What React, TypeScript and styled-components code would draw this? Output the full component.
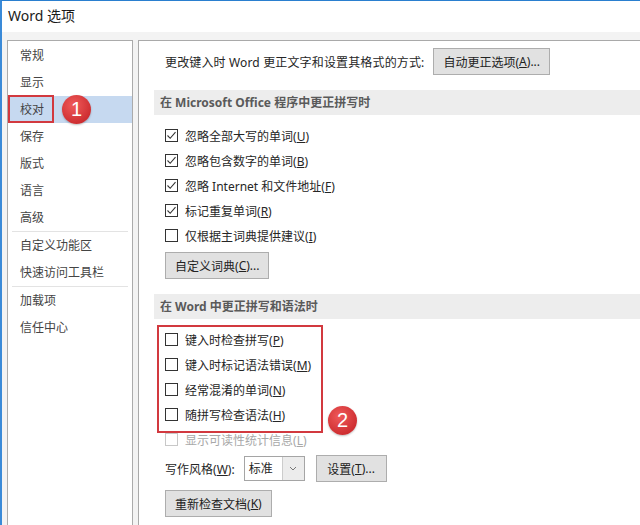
import styled, { createGlobalStyle } from "styled-components";

const GlobalStyle = createGlobalStyle`
  html, body {
    margin: 0;
    padding: 0;
  }
  body {
    font-family: "Noto Sans", "Noto Sans CJK SC", sans-serif;
    background: #ffffff;
  }
`;

const navItems = [
  { label: "常规" },
  { label: "显示" },
  { label: "校对", selected: true },
  { label: "保存" },
  { label: "版式" },
  { label: "语言" },
  { label: "高级", sepAfter: true },
  { label: "自定义功能区" },
  { label: "快速访问工具栏", sepAfter: true },
  { label: "加载项" },
  { label: "信任中心" },
];

function Key({ k }: { k: string }) {
  return (
    <>
      (<u>{k}</u>)
    </>
  );
}

function Check({ checked, disabled }: { checked?: boolean; disabled?: boolean }) {
  return (
    <Box $disabled={disabled}>
      {checked && (
        <svg width="11" height="11" viewBox="0 0 11 11">
          <path d="M1.5 5.5 L4.2 8.3 L9.5 2.2" fill="none" stroke="#333" strokeWidth="1.1" />
        </svg>
      )}
    </Box>
  );
}

export default function App() {
  return (
    <>
      <GlobalStyle />
      <Window>
        <TitleBar>Word 选项</TitleBar>
        <Body>
          <Nav>
            {navItems.map((item) => (
              <div key={item.label}>
                <NavItem $selected={item.selected}>
                  {item.label}
                  {item.selected && (
                    <>
                      <NavFrame />
                      <Badge $left={54} $top={-1}>1</Badge>
                    </>
                  )}
                </NavItem>
                {item.sepAfter && <NavSep />}
              </div>
            ))}
          </Nav>
          <Content>
            <Inner>
              <TopRow>
                <span>更改键入时 Word 更正文字和设置其格式的方式:</span>
                <Button>
                  自动更正选项<Key k="A" />...
                </Button>
              </TopRow>
            </Inner>

            <SectionHeader>在 Microsoft Office 程序中更正拼写时</SectionHeader>
            <Inner>
              <List>
                <CheckRow>
                  <Check checked />
                  <span>
                    忽略全部大写的单词<Key k="U" />
                  </span>
                </CheckRow>
                <CheckRow>
                  <Check checked />
                  <span>
                    忽略包含数字的单词<Key k="B" />
                  </span>
                </CheckRow>
                <CheckRow>
                  <Check checked />
                  <span>
                    忽略 Internet 和文件地址<Key k="F" />
                  </span>
                </CheckRow>
                <CheckRow>
                  <Check checked />
                  <span>
                    标记重复单词<Key k="R" />
                  </span>
                </CheckRow>
                <CheckRow>
                  <Check />
                  <span>
                    仅根据主词典提供建议<Key k="I" />
                  </span>
                </CheckRow>
              </List>
              <Button $mt={4}>
                自定义词典<Key k="C" />...
              </Button>
            </Inner>

            <SectionHeader>在 Word 中更正拼写和语法时</SectionHeader>
            <Inner>
              <Group>
                <CheckRow>
                  <Check />
                  <span>
                    键入时检查拼写<Key k="P" />
                  </span>
                </CheckRow>
                <CheckRow>
                  <Check />
                  <span>
                    键入时标记语法错误<Key k="M" />
                  </span>
                </CheckRow>
                <CheckRow>
                  <Check />
                  <span>
                    经常混淆的单词<Key k="N" />
                  </span>
                </CheckRow>
                <CheckRow>
                  <Check />
                  <span>
                    随拼写检查语法<Key k="H" />
                  </span>
                </CheckRow>
                <CheckRow $disabled>
                  <Check disabled />
                  <span>
                    显示可读性统计信息<Key k="L" />
                  </span>
                </CheckRow>
                <GroupFrame />
                <Badge $left={163} $top={79}>2</Badge>
              </Group>
              <StyleRow>
                <span>
                  写作风格<Key k="W" />:
                </span>
                <Select>
                  <SelectValue>标准</SelectValue>
                  <SelectArrow>
                    <svg width="8" height="5" viewBox="0 0 8 5">
                      <path d="M1 1 L4 4 L7 1" fill="none" stroke="#777" strokeWidth="1" />
                    </svg>
                  </SelectArrow>
                </Select>
                <Button $minWidth={71}>
                  设置<Key k="T" />...
                </Button>
              </StyleRow>
              <Button $mt={8}>
                重新检查文档<Key k="K" />
              </Button>
            </Inner>
          </Content>
        </Body>
      </Window>
    </>
  );
}

const Window = styled.div`
  width: 640px;
  height: 525px;
  box-sizing: border-box;
  border-top: 1px solid #2a7fcf;
  border-left: 2px solid #3a8ad8;
  display: flex;
  flex-direction: column;
  overflow: hidden;
`;

const TitleBar = styled.div`
  height: 31px;
  flex-shrink: 0;
  display: flex;
  align-items: center;
  padding-left: 6px;
  padding-bottom: 3px;
  box-sizing: border-box;
  background: #ffffff;
  font-size: 14px;
  color: #1a1a1a;
`;

const Body = styled.div`
  flex: 1;
  display: flex;
  gap: 5px;
  padding: 8px 0 0 5px;
  background: #f3f3f3;
  min-height: 0;
`;

const Nav = styled.div`
  width: 126px;
  flex-shrink: 0;
  box-sizing: border-box;
  background: #ffffff;
  border: 1px solid #ababab;
  border-bottom: none;
  padding-top: 1px;
`;

const NavItem = styled.div<{ $selected?: boolean }>`
  position: relative;
  height: 27px;
  line-height: 27px;
  padding-left: 12px;
  font-size: 12px;
  color: #444444;
  background: ${(p) => (p.$selected ? "#c6d9f0" : "transparent")};
`;

const NavSep = styled.div`
  height: 1px;
  margin: 0 4px;
  background: #e3e3e3;
`;

const NavFrame = styled.div`
  position: absolute;
  left: 0;
  top: -1px;
  width: 46px;
  height: 28px;
  box-sizing: border-box;
  border: 2px solid #d2393f;
`;

const Badge = styled.div<{ $left: number; $top: number }>`
  position: absolute;
  left: ${(p) => p.$left}px;
  top: ${(p) => p.$top}px;
  width: 29px;
  height: 29px;
  border-radius: 50%;
  background: radial-gradient(circle at 40% 35%, #f05a5a, #cc2c2f 75%);
  box-shadow: 0 1px 2px rgba(0, 0, 0, 0.25);
  color: #ffffff;
  font-family: "Liberation Sans", Arial, sans-serif;
  font-size: 20px;
  line-height: 29px;
  text-align: center;
  z-index: 5;
`;

const Content = styled.div`
  flex: 1;
  background: #ffffff;
  border-top: 1px solid #a9a9a9;
  border-left: 1px solid #a9a9a9;
  padding: 7px 0 0 15px;
  font-size: 12px;
  color: #262626;
`;

const Inner = styled.div`
  padding-left: 11px;
  display: flex;
  flex-direction: column;
  align-items: flex-start;
`;

const TopRow = styled.div`
  display: flex;
  align-items: center;
  gap: 9px;
  letter-spacing: 0.15px;
`;

const Button = styled.div<{ $mt?: number; $minWidth?: number }>`
  height: 27px;
  box-sizing: border-box;
  margin-top: ${(p) => p.$mt ?? 0}px;
  min-width: ${(p) => p.$minWidth ?? 0}px;
  padding: 0 9px;
  display: flex;
  align-items: center;
  justify-content: center;
  background: #e1e1e1;
  border: 1px solid #adadad;
  color: #222222;
  font-size: 12px;
  letter-spacing: 0;
  white-space: nowrap;
`;

const SectionHeader = styled.div`
  margin-top: 15px;
  height: 25px;
  line-height: 25px;
  padding-left: 6px;
  background: #ededed;
  color: #5a5a5a;
  font-weight: 700;
  font-size: 12px;
`;

const List = styled.div`
  padding-top: 8px;
  display: flex;
  flex-direction: column;
`;

const Group = styled.div`
  position: relative;
  margin-top: 8px;
  display: flex;
  flex-direction: column;
`;

const GroupFrame = styled.div`
  position: absolute;
  left: -8px;
  top: -2px;
  width: 166px;
  height: 108px;
  box-sizing: border-box;
  border: 2px solid #d2393f;
  pointer-events: none;
`;

const CheckRow = styled.div<{ $disabled?: boolean }>`
  height: 25px;
  display: flex;
  align-items: center;
  gap: 7px;
  color: ${(p) => (p.$disabled ? "#a8a8a8" : "#262626")};
  white-space: nowrap;
`;

const Box = styled.div<{ $disabled?: boolean }>`
  width: 13px;
  height: 13px;
  box-sizing: border-box;
  border: 1px solid ${(p) => (p.$disabled ? "#c8c8c8" : "#333333")};
  background: #ffffff;
  display: flex;
  align-items: center;
  justify-content: center;
`;

const StyleRow = styled.div`
  margin-top: 3px;
  display: flex;
  align-items: center;
  gap: 9px;
  white-space: nowrap;
`;

const Select = styled.div`
  width: 61px;
  height: 25px;
  box-sizing: border-box;
  border: 1px solid #a5a5a5;
  display: flex;
  background: #ffffff;
  margin-right: 2px;
`;

const SelectValue = styled.div`
  flex: 1;
  padding-left: 4px;
  line-height: 23px;
`;

const SelectArrow = styled.div`
  width: 21px;
  border-left: 1px solid #cccccc;
  background: #ececec;
  display: flex;
  align-items: center;
  justify-content: center;
`;
